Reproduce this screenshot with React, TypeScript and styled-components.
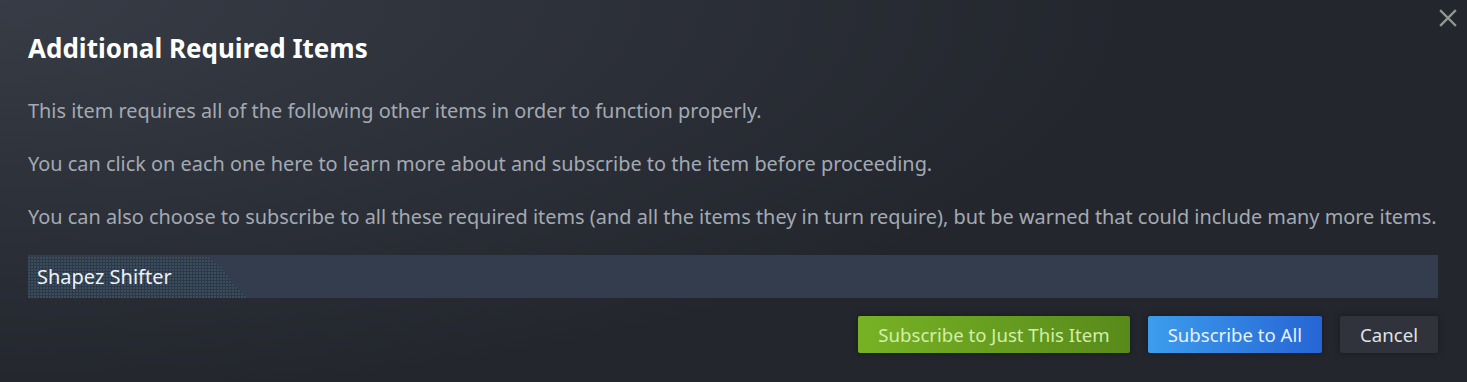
import React from "react";
import styled, { createGlobalStyle } from "styled-components";

const Global = createGlobalStyle`
  html, body { margin: 0; padding: 0; background: #25282e; }
  body { font-family: "Noto Sans", "Open Sans", sans-serif; }
  * { box-sizing: border-box; }
`;

const Dialog = styled.div`
  position: relative;
  width: 1467px;
  height: 382px;
  overflow: hidden;
  padding: 32px 29px 0 28px;
  background:
    radial-gradient(ellipse 120% 160% at 0% 0%, rgba(62, 67, 78, 0.75) 0%, rgba(62, 67, 78, 0) 65%),
    #23262d;
  display: flex;
  flex-direction: column;
`;

const Close = styled.button`
  position: absolute;
  top: 5px;
  right: 6px;
  width: 26px;
  height: 26px;
  padding: 0;
  border: none;
  background: transparent;
  display: flex;
  align-items: center;
  justify-content: center;
  cursor: pointer;
`;

const Title = styled.h1`
  margin: 0;
  font-size: 26px;
  line-height: 32px;
  font-weight: 700;
  color: #ffffff;
`;

const Body = styled.div`
  margin-top: 35px;
  display: flex;
  flex-direction: column;
  gap: 29px;
`;

const Para = styled.p`
  margin: 0;
  font-size: 19.9px;
  line-height: 24px;
  color: #a3aab3;
  white-space: nowrap;
`;

const ItemRow = styled.div`
  position: relative;
  margin-top: 26px;
  height: 43px;
  background: #343d4d;
  display: flex;
  align-items: center;
  padding-left: 9px;
  overflow: hidden;
  &::before {
    content: "";
    position: absolute;
    left: 0;
    top: 2px;
    bottom: 0;
    width: 220px;
    background:
      radial-gradient(circle at 1px 1px, rgba(120, 140, 90, 0.35) 0.6px, transparent 1px) 0 0 / 3px 3px,
      #2a3850;
    clip-path: polygon(0 0, 82% 0, 88% 25%, 94% 70%, 100% 100%, 0 100%);
  }
`;

const ItemName = styled.span`
  position: relative;
  font-size: 20px;
  color: #eef2f6;
`;

const Actions = styled.div`
  margin-top: 18px;
  display: flex;
  justify-content: flex-end;
  gap: 18px;
`;

const Btn = styled.button<{ $variant: "green" | "blue" | "plain" }>`
  height: 37px;
  padding: 0 20px;
  border: none;
  border-radius: 2px;
  font-family: "Noto Sans", "Open Sans", sans-serif;
  font-size: 18.6px;
  line-height: 37px;
  cursor: pointer;
  box-shadow: 0 0 6px rgba(0, 0, 0, 0.35);
  background: ${(p) =>
    p.$variant === "green"
      ? "linear-gradient(to right, #77b224 0%, #588a1b 100%)"
      : p.$variant === "blue"
      ? "linear-gradient(to right, #3c9ded 0%, #2665d4 100%)"
      : "#30333b"};
  color: ${(p) =>
    p.$variant === "green" ? "#d2efa9" : p.$variant === "blue" ? "#e6f2ff" : "#dfe3e7"};
`;

export default function App() {
  return (
    <>
      <Global />
      <Dialog>
        <Close aria-label="Close">
          <svg width="18" height="18" viewBox="0 0 18 18">
            <path d="M2 2 L16 16 M16 2 L2 16" stroke="#8f9990" strokeWidth="2.4" strokeLinecap="square" />
          </svg>
        </Close>
        <Title>Additional Required Items</Title>
        <Body>
          <Para>This item requires all of the following other items in order to function properly.</Para>
          <Para>You can click on each one here to learn more about and subscribe to the item before proceeding.</Para>
          <Para>
            You can also choose to subscribe to all these required items (and all the items they in turn require), but be warned that could include many more items.
          </Para>
        </Body>
        <ItemRow>
          <ItemName>Shapez Shifter</ItemName>
        </ItemRow>
        <Actions>
          <Btn $variant="green">Subscribe to Just This Item</Btn>
          <Btn $variant="blue">Subscribe to All</Btn>
          <Btn $variant="plain">Cancel</Btn>
        </Actions>
      </Dialog>
    </>
  );
}
